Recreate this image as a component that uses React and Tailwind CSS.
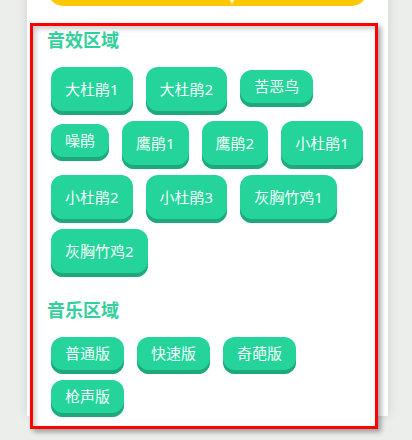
const sounds = ['大杜鹃1', '大杜鹃2', '苦恶鸟', '噪鹃', '鹰鹃1', '鹰鹃2', '小杜鹃1', '小杜鹃2', '小杜鹃3', '灰胸竹鸡1', '灰胸竹鸡2'];
const music = ['普通版', '快速版', '奇葩版', '枪声版'];

function Chip({ label, mixed }) {
  // labels with a digit render taller in the original page
  const tall = /\d/.test(label);
  return (
    <button
      className={
        'flex items-center justify-center px-[14px] pb-[4px] rounded-[12px] bg-[#24d49b] text-[#f2fff9] text-[15px] leading-none shadow-[inset_0_-4px_0_#1ea87c] ' +
        (tall ? 'h-[48px]' : 'h-[37px]') +
        (mixed && !tall ? ' mt-[3px]' : '')
      }
    >
      {label}
    </button>
  );
}

function Section({ title, items, mixed, className }) {
  return (
    <section className={className}>
      <h2 className="pl-[14px] text-[18px] leading-[28px] font-bold text-[#33cf9c]">{title}</h2>
      <div className="mt-[13px] pl-[18px] flex flex-wrap items-start gap-x-[13px] gap-y-[6px]">
        {items.map((s) => (
          <Chip key={s} label={s} mixed={mixed} />
        ))}
      </div>
    </section>
  );
}

export default function App() {
  return (
    <main
      className="h-[440px] overflow-hidden bg-[#eceeeb]"
      style={{ fontFamily: '"Noto Sans", "Noto Sans CJK SC", sans-serif' }}
    >
      <div className="ml-[27px] w-[361px] h-[440px] bg-white shadow-[0_0_10px_rgba(0,0,0,0.12)]">
        <div className="relative mx-[21px] h-[30px] -mt-[24px] rounded-full bg-[#ffc800]">
          <svg className="absolute left-[180px] bottom-[1px]" width="8" height="6" viewBox="0 0 8 6">
            <path d="M1 0 L7 0 L4 5 Z" fill="#fff3c4" />
          </svg>
        </div>
        <div className="ml-[3px] mt-[17px] w-[348px] bg-white border-[3px] border-[#ff0000] pb-[9px] shadow-[3px_3px_5px_rgba(0,0,0,0.35),inset_3px_3px_5px_rgba(0,0,0,0.2)]">
          <Section title="音效区域" items={sounds} mixed />
          <Section title="音乐区域" items={music} className="mt-[19px]" />
        </div>
      </div>
    </main>
  );
}
